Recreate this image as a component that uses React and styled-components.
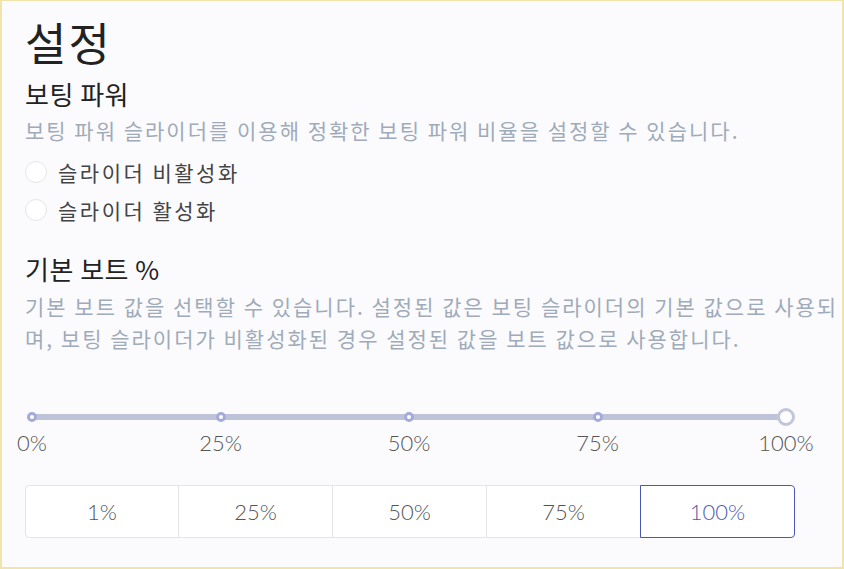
import React, { useState } from "react";
import styled, { createGlobalStyle } from "styled-components";

const GlobalStyle = createGlobalStyle`
  html, body {
    margin: 0;
    padding: 0;
    background: #fbfbfe;
  }
  body {
    font-family: "Noto Sans CJK KR", "Noto Sans", sans-serif;
  }
  * { box-sizing: border-box; }
`;

const Page = styled.div`
  height: 569px;
  border: 2px solid #f1e4aa;
  border-top-width: 1px;
  background: #fbfbfe;
  padding: 9px 0 0 23px;
  overflow: hidden;
`;

const Title = styled.h1`
  margin: 0;
  font-size: 45px;
  font-weight: 400;
  line-height: 64px;
  letter-spacing: 2px;
  color: #222;
`;

const SectionTitle = styled.h2`
  margin: ${p => p.$top || 0}px 0 0;
  font-size: 26px;
  font-weight: 400;
  line-height: 40px;
  letter-spacing: 0.5px;
  color: #222;
`;

const Description = styled.p`
  margin: ${p => p.$top || 0}px 0 0;
  font-size: 21px;
  line-height: 32px;
  letter-spacing: 2px;
  color: #9fabb9;
`;

const RadioList = styled.div`
  display: flex;
  flex-direction: column;
  gap: 10px;
  margin-top: 12px;
`;

const RadioRow = styled.label`
  display: flex;
  align-items: center;
  gap: 11px;
  height: 28px;
  cursor: pointer;
`;

const RadioCircle = styled.span`
  width: 22px;
  height: 22px;
  border-radius: 50%;
  border: 1px solid #e6e6e9;
  background: #fff;
  flex-shrink: 0;
`;

const RadioText = styled.span`
  font-size: 21px;
  letter-spacing: 2.5px;
  color: #444;
`;

const SliderBox = styled.div`
  width: 770px;
  margin-top: 60px;
  padding: 0 9px 0 7px;
`;

const Track = styled.div`
  height: 6px;
  border-radius: 3px;
  background: #bec3da;
  display: flex;
  justify-content: space-between;
  align-items: center;
`;

const Stop = styled.div`
  width: 0;
  display: flex;
  justify-content: center;
  align-items: center;
`;

const Dot = styled.span`
  flex-shrink: 0;
  width: ${p => (p.$handle ? 18 : 10)}px;
  height: ${p => (p.$handle ? 18 : 10)}px;
  border-radius: 50%;
  background: #fff;
  border: ${p => (p.$handle ? "3px solid #c2c6da" : "3px solid #a5aadb")};
`;

const Labels = styled.div`
  display: flex;
  justify-content: space-between;
  margin-top: 9px;
`;

const Label = styled.span`
  width: 0;
  display: flex;
  justify-content: center;
  white-space: nowrap;
  font-family: Lato, "Noto Sans", sans-serif;
  font-weight: 300;
  font-size: 22px;
  color: #555;
  line-height: 28px;
`;

const ButtonGroup = styled.div`
  display: grid;
  grid-template-columns: repeat(5, 1fr);
  width: 770px;
  margin-top: 28px;
`;

const PresetButton = styled.button`
  height: 53px;
  margin-left: -1px;
  background: #fff;
  border: 1px solid ${p => (p.$active ? "#4b57b7" : "#e5e5e8")};
  position: relative;
  z-index: ${p => (p.$active ? 1 : 0)};
  font-family: Lato, "Noto Sans", sans-serif;
  font-weight: 300;
  font-size: 22px;
  color: ${p => (p.$active ? "#4f5ab0" : "#555")};
  cursor: pointer;
  &:first-child {
    margin-left: 0;
    border-radius: 4px 0 0 4px;
  }
  &:last-child {
    border-radius: 0 4px 4px 0;
  }
`;

const stops = [0, 25, 50, 75, 100];
const presets = [1, 25, 50, 75, 100];

export default function App() {
  const [preset, setPreset] = useState(100);

  return (
    <>
      <GlobalStyle />
      <Page>
        <Title>설정</Title>
        <SectionTitle>보팅 파워</SectionTitle>
        <Description>보팅 파워 슬라이더를 이용해 정확한 보팅 파워 비율을 설정할 수 있습니다.</Description>
        <RadioList>
          <RadioRow>
            <RadioCircle />
            <RadioText>슬라이더 비활성화</RadioText>
          </RadioRow>
          <RadioRow>
            <RadioCircle />
            <RadioText>슬라이더 활성화</RadioText>
          </RadioRow>
        </RadioList>

        <SectionTitle $top={25}>기본 보트 %</SectionTitle>
        <Description $top={1}>
          기본 보트 값을 선택할 수 있습니다. 설정된 값은 보팅 슬라이더의 기본 값으로 사용되며, 보팅 슬라이더가 비활성화된 경우 설정된 값을 보트 값으로 사용합니다.
        </Description>

        <SliderBox>
          <Track>
            {stops.map(s => (
              <Stop key={s}>
                <Dot $handle={s === 100} />
              </Stop>
            ))}
          </Track>
          <Labels>
            {stops.map(s => (
              <Label key={s}>{s}%</Label>
            ))}
          </Labels>
        </SliderBox>

        <ButtonGroup>
          {presets.map(p => (
            <PresetButton key={p} $active={p === preset} onClick={() => setPreset(p)}>
              {p}%
            </PresetButton>
          ))}
        </ButtonGroup>
      </Page>
    </>
  );
}
